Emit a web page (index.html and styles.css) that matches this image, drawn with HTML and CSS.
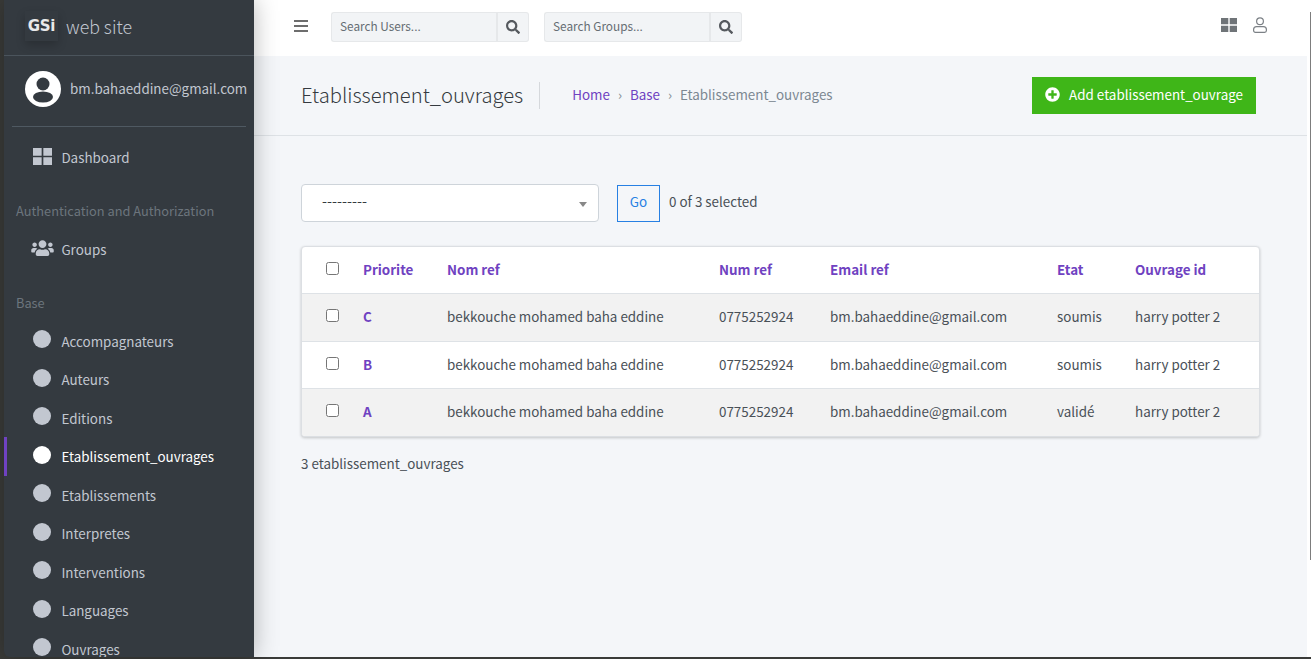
FILE: index.html
```html
<!DOCTYPE html>
<html lang="en">
<head>
  <meta charset="UTF-8">
  <title>Etablissement_ouvrages</title>
  <meta name="viewport" content="width=device-width, initial-scale=1.0">
  <link rel="stylesheet" href="styles.css">
</head>
<body>

<div class="frame">

  <!-- Sidebar -->
  <aside class="sidebar">
    <div class="brand">
      <span class="brand-logo">GSi</span>
      <span class="brand-name">web site</span>
    </div>

    <div class="user-panel">
      <svg class="avatar" viewBox="0 0 36 36">
        <circle cx="18" cy="18" r="18" fill="#fff"/>
        <circle cx="18" cy="13" r="6.5" fill="#343a40"/>
        <ellipse cx="18" cy="26" rx="10" ry="5.5" fill="#343a40"/>
      </svg>
      <span class="user-email">bm.bahaeddine@gmail.com</span>
    </div>

    <nav class="side-nav">
      <a class="side-link" href="#">
        <span class="side-icon">
          <svg class="grid-icon" viewBox="0 0 18 16"><path d="M0 0h8.2v7.2H0zM9.8 0H18v7.2H9.8zM0 8.8h8.2V16H0zM9.8 8.8H18V16H9.8z"/></svg>
        </span>
        Dashboard
      </a>

      <div class="side-title side-title-first">Authentication and Authorization</div>
      <a class="side-link" href="#">
        <span class="side-icon">
          <svg class="groups-icon" viewBox="0 0 640 512"><path d="M96 224c35.3 0 64-28.7 64-64s-28.7-64-64-64-64 28.7-64 64 28.7 64 64 64zm448 0c35.3 0 64-28.7 64-64s-28.7-64-64-64-64 28.7-64 64 28.7 64 64 64zm32 32h-64c-17.6 0-33.5 7.1-45.1 18.6 40.3 22.1 68.9 62 75.1 109.4h66c17.7 0 32-14.3 32-32v-32c0-35.3-28.7-64-64-64zm-256 0c61.9 0 112-50.1 112-112S381.9 32 320 32 208 82.1 208 144s50.1 112 112 112zm76.8 32h-8.3c-20.8 10-43.9 16-68.5 16s-47.6-6-68.5-16h-8.3C179.6 288 128 339.6 128 403.2V432c0 26.5 21.5 48 48 48h288c26.5 0 48-21.5 48-48v-28.8c0-63.6-51.6-115.2-115.2-115.2zm-223.7-13.4C161.5 263.1 145.6 256 128 256H64c-35.3 0-64 28.7-64 64v32c0 17.7 14.3 32 32 32h65.9c6.3-47.4 34.9-87.3 75.2-109.4z"/></svg>
        </span>
        Groups
      </a>

      <div class="side-title">Base</div>
      <a class="side-link" href="#"><span class="side-icon"><i class="dot"></i></span>Accompagnateurs</a>
      <a class="side-link" href="#"><span class="side-icon"><i class="dot"></i></span>Auteurs</a>
      <a class="side-link" href="#"><span class="side-icon"><i class="dot"></i></span>Editions</a>
      <a class="side-link active" href="#"><span class="side-icon"><i class="dot"></i></span>Etablissement_ouvrages</a>
      <a class="side-link" href="#"><span class="side-icon"><i class="dot"></i></span>Etablissements</a>
      <a class="side-link" href="#"><span class="side-icon"><i class="dot"></i></span>Interpretes</a>
      <a class="side-link" href="#"><span class="side-icon"><i class="dot"></i></span>Interventions</a>
      <a class="side-link" href="#"><span class="side-icon"><i class="dot"></i></span>Languages</a>
      <a class="side-link" href="#"><span class="side-icon"><i class="dot"></i></span>Ouvrages</a>
    </nav>
  </aside>

  <div class="main">

    <!-- Top bar -->
    <header class="topbar">
      <svg class="burger" viewBox="0 0 14 12"><path d="M0 0h14v2H0zM0 5h14v2H0zM0 10h14v2H0z"/></svg>

      <form class="search">
        <input class="search-input" type="text" placeholder="Search Users...">
        <button class="search-btn" type="button">
          <svg viewBox="0 0 512 512"><path d="M505 442.7L405.3 343c-4.5-4.5-10.6-7-17-7H372c27.6-35.3 44-79.7 44-128C416 93.1 322.9 0 208 0S0 93.1 0 208s93.1 208 208 208c48.3 0 92.7-16.4 128-44v16.3c0 6.4 2.5 12.5 7 17l99.7 99.7c9.4 9.4 24.6 9.4 33.9 0l28.3-28.3c9.4-9.4 9.4-24.6.1-34zM208 336c-70.7 0-128-57.2-128-128 0-70.7 57.2-128 128-128 70.7 0 128 57.2 128 128 0 70.7-57.2 128-128 128z"/></svg>
        </button>
      </form>

      <form class="search">
        <input class="search-input" type="text" placeholder="Search Groups...">
        <button class="search-btn" type="button">
          <svg viewBox="0 0 512 512"><path d="M505 442.7L405.3 343c-4.5-4.5-10.6-7-17-7H372c27.6-35.3 44-79.7 44-128C416 93.1 322.9 0 208 0S0 93.1 0 208s93.1 208 208 208c48.3 0 92.7-16.4 128-44v16.3c0 6.4 2.5 12.5 7 17l99.7 99.7c9.4 9.4 24.6 9.4 33.9 0l28.3-28.3c9.4-9.4 9.4-24.6.1-34zM208 336c-70.7 0-128-57.2-128-128 0-70.7 57.2-128 128-128 70.7 0 128 57.2 128 128 0 70.7-57.2 128-128 128z"/></svg>
        </button>
      </form>

      <div class="top-icons">
        <svg class="top-grid" viewBox="0 0 16 14"><path d="M0 0h7.3v6.3H0zM8.7 0H16v6.3H8.7zM0 7.7h7.3V14H0zM8.7 7.7H16V14H8.7z"/></svg>
        <svg class="top-user" viewBox="0 0 14 16"><circle cx="7" cy="4.2" r="3.4"/><path d="M3.6 9.7h6.8c1.8 0 3 1.2 3 2.9v.9c0 1-.8 1.8-1.8 1.8H2.4c-1 0-1.8-.8-1.8-1.8v-.9c0-1.7 1.2-2.9 3-2.9z"/></svg>
      </div>
    </header>

    <!-- Page header -->
    <div class="page-header">
      <h1 class="page-title">Etablissement_ouvrages</h1>
      <div class="crumbs">
        <a href="#">Home</a><span class="sep">›</span><a href="#">Base</a><span class="sep">›</span><span class="crumb-current">Etablissement_ouvrages</span>
      </div>
      <a class="add-btn" href="#">
        <svg viewBox="0 0 512 512"><path d="M256 8C119 8 8 119 8 256s111 248 248 248 248-111 248-248S393 8 256 8zm144 276c0 6.6-5.4 12-12 12h-92v92c0 6.6-5.4 12-12 12h-56c-6.6 0-12-5.4-12-12v-92h-92c-6.6 0-12-5.4-12-12v-56c0-6.6 5.4-12 12-12h92v-92c0-6.6 5.4-12 12-12h56c6.6 0 12 5.4 12 12v92h92c6.6 0 12 5.4 12 12v56z"/></svg>
        <span class="add-label">Add etablissement_ouvrage</span>
      </a>
    </div>

    <!-- Changelist -->
    <section class="content">
      <div class="actions">
        <div class="action-select">
          <span class="action-value">---------</span>
          <i class="caret"></i>
        </div>
        <button class="go-btn" type="button">Go</button>
        <span class="selected-count">0 of 3 selected</span>
      </div>

      <div class="table-card">
        <table class="result-table">
          <colgroup>
            <col class="col-check"><col class="col-priorite"><col class="col-nom"><col class="col-num"><col class="col-email"><col class="col-etat"><col class="col-ouvrage">
          </colgroup>
          <thead>
            <tr>
              <th><input type="checkbox"></th>
              <th>Priorite</th>
              <th>Nom ref</th>
              <th>Num ref</th>
              <th>Email ref</th>
              <th>Etat</th>
              <th>Ouvrage id</th>
            </tr>
          </thead>
          <tbody>
            <tr>
              <td><input type="checkbox"></td>
              <td><a href="#">C</a></td>
              <td>bekkouche mohamed baha eddine</td>
              <td>0775252924</td>
              <td>bm.bahaeddine@gmail.com</td>
              <td>soumis</td>
              <td>harry potter 2</td>
            </tr>
            <tr>
              <td><input type="checkbox"></td>
              <td><a href="#">B</a></td>
              <td>bekkouche mohamed baha eddine</td>
              <td>0775252924</td>
              <td>bm.bahaeddine@gmail.com</td>
              <td>soumis</td>
              <td>harry potter 2</td>
            </tr>
            <tr>
              <td><input type="checkbox"></td>
              <td><a href="#">A</a></td>
              <td>bekkouche mohamed baha eddine</td>
              <td>0775252924</td>
              <td>bm.bahaeddine@gmail.com</td>
              <td>validé</td>
              <td>harry potter 2</td>
            </tr>
          </tbody>
        </table>
      </div>

      <p class="result-count">3 etablissement_ouvrages</p>
    </section>
  </div>

  <!-- window edge with scrollbar line -->
  <div class="edge"><div class="edge-line"></div></div>
</div>

</body>
</html>
```

FILE: styles.css
```css
/* Global styles */
html, body {
  margin: 0;
  padding: 0;
  height: 100%;
  overflow: hidden;
}

body {
  font-family: "Noto Sans CJK SC", "Source Sans Pro", "Noto Sans", sans-serif;
  font-size: 13.4px;
  line-height: 20px;
  color: #495057;
  background: #3a3b39;
}

a {
  text-decoration: none;
}

.frame {
  display: flex;
  height: 657px;
  padding-left: 4px;
  background: #3a3b39;
}

/* Sidebar */
.sidebar {
  position: relative;
  z-index: 2;
  flex: 0 0 250px;
  height: 657px;
  overflow: hidden;
  background: #343a40;
  border-bottom-left-radius: 6px;
  box-shadow: 0 0 24px rgba(0, 0, 0, 0.28);
}

.brand {
  display: flex;
  align-items: center;
  height: 55px;
  padding-left: 21px;
  border-bottom: 1px solid #4b545c;
}

.brand-logo {
  width: 33px;
  height: 30px;
  margin-top: -4px;
  font-family: "DejaVu Sans", sans-serif;
  font-size: 15px;
  font-weight: 700;
  line-height: 31px;
  letter-spacing: -0.3px;
  text-align: center;
  color: #e9e9e9;
  box-shadow: 0 4px 10px rgba(0, 0, 0, 0.2);
}

.brand-name {
  margin-left: 8px;
  margin-top: -3px;
  font-size: 17.8px;
  font-weight: 300;
  color: #c2c7d0;
}

.user-panel {
  display: flex;
  align-items: center;
  gap: 9px;
  height: 66px;
  margin: 0 8px;
  padding: 0 0 4px 13px;
  border-bottom: 1px solid #4f5962;
  white-space: nowrap;
}

.avatar {
  flex: none;
  width: 36px;
  height: 36px;
}

.user-email {
  margin-top: -2px;
  color: #c2c7d0;
}

.side-nav {
  padding-top: 11px;
}

.side-link {
  display: flex;
  align-items: center;
  height: 38.5px;
  color: #c2c7d0;
  white-space: nowrap;
}

.side-link.active {
  color: #fff;
  box-shadow: inset 3px 0 0 #6f42c1;
}

.side-icon {
  display: flex;
  justify-content: center;
  align-items: center;
  flex: none;
  width: 57.4px;
  padding-left: 19px;
  box-sizing: border-box;
  margin-top: -3px;
}

.grid-icon {
  width: 19px;
  height: 17px;
  margin-top: 2px;
  fill: #c2c7d0;
}

.groups-icon {
  width: 23px;
  height: 18px;
  margin-top: 2px;
  fill: #c2c7d0;
}

.dot {
  display: block;
  width: 18px;
  height: 18px;
  border-radius: 50%;
  background: #c2c7d0;
}

.active .dot {
  background: #fff;
}

.side-title {
  height: 15px;
  margin-top: 27px;
  margin-bottom: 11.5px;
  padding-left: 12px;
  font-size: 12.8px;
  line-height: 15px;
  color: #6c757d;
  white-space: nowrap;
}

.side-title-first {
  margin-top: 26px;
  margin-bottom: 12px;
}

/* Main column */
.main {
  flex: 0 0 1053px;
  height: 657px;
  background: #f4f6f9;
}

.edge {
  flex: 0 0 4px;
  display: flex;
  justify-content: flex-end;
  align-items: flex-start;
  height: 657px;
  background: #fff;
}

.edge-line {
  width: 1px;
  height: 548px;
  margin-top: 12px;
  background: #7d7d7d;
}

.topbar {
  display: flex;
  align-items: center;
  height: 56px;
  padding-left: 40px;
  background: #fff;
}

.burger {
  width: 14px;
  height: 12px;
  margin-right: 23px;
  margin-top: -5px;
  fill: #6d6d6d;
}

.search {
  display: flex;
  width: 197.5px;
  height: 30px;
  margin-right: 15.5px;
  margin-top: -3px;
}

.search-input {
  flex: 1;
  width: 0;
  padding: 0 8px 2px;
  font: inherit;
  font-size: 11.8px;
  color: #495057;
  background: #f2f4f6;
  border: 1px solid #e6e8ea;
  border-right: 0;
  border-radius: 3px 0 0 3px;
  outline: none;
}

.search-input::placeholder {
  color: #666d73;
  opacity: 1;
}

.search-btn {
  display: flex;
  justify-content: center;
  align-items: center;
  width: 33px;
  padding: 0;
  background: #f2f4f6;
  border: 1px solid #e6e8ea;
  border-left-width: 2px;
  border-radius: 0 3px 3px 0;
}

.search-btn svg {
  width: 14px;
  height: 14px;
  fill: #55595e;
}

.top-icons {
  display: flex;
  align-items: center;
  gap: 16px;
  margin-left: auto;
  margin-right: 40px;
  margin-top: -7px;
}

.top-grid {
  width: 16px;
  height: 14px;
  fill: #6f7478;
}

.top-user {
  width: 14px;
  height: 16px;
  fill: none;
  stroke: #7c8186;
  stroke-width: 1.2;
}

/* Page header */
.page-header {
  display: flex;
  align-items: center;
  height: 79px;
  padding: 0 51px 0 47px;
  border-bottom: 1px solid #dee2e6;
}

.page-title {
  margin: 0;
  padding: 0 16px 2px 0;
  font-size: 20.2px;
  font-weight: 300;
  line-height: 25px;
  color: #343a40;
  border-right: 1px solid #d5d8dc;
}

.crumbs {
  display: flex;
  align-items: center;
  margin-top: -3px;
  margin-left: 32px;
}

.crumbs a {
  color: #6f42c1;
}

.sep {
  width: 20px;
  text-align: center;
  color: #868e96;
}

.crumb-current {
  color: #7c8892;
}

.add-btn {
  display: flex;
  align-items: center;
  gap: 9px;
  height: 37px;
  margin-left: auto;
  padding: 0 13px;
  color: #fff;
  background: #3fb618;
}

.add-btn svg {
  width: 15px;
  height: 15px;
  margin-top: -2px;
  fill: #fff;
}

.add-label {
  margin-top: -3px;
}

/* Changelist */
.content {
  padding: 48px 47px 0;
}

.actions {
  display: flex;
  align-items: center;
  height: 38px;
}

.action-select {
  display: flex;
  justify-content: space-between;
  align-items: center;
  width: 298px;
  height: 38px;
  box-sizing: border-box;
  padding: 0 11px 0 20px;
  font-size: 14.4px;
  color: #343a40;
  background: #fff;
  border: 1px solid #ced4da;
  border-radius: 4px;
}

.action-value {
  margin-top: -5px;
}

.caret {
  display: block;
  width: 0;
  height: 0;
  margin-top: 2px;
  border-top: 5px solid #888;
  border-left: 4px solid transparent;
  border-right: 4px solid transparent;
}

.go-btn {
  width: 43px;
  height: 37px;
  margin-left: 18px;
  padding: 0 0 5px;
  font: inherit;
  color: #2780e3;
  background: transparent;
  border: 1px solid #2780e3;
  border-radius: 0;
  box-sizing: border-box;
}

.selected-count {
  margin-top: -5px;
  margin-left: 9px;
}

.table-card {
  width: 959px;
  box-sizing: border-box;
  margin-top: 24px;
  background: #fff;
  border: 1px solid #dcdfe3;
  border-radius: 4px;
  box-shadow: 0 1px 3px rgba(0, 0, 0, 0.2);
  overflow: hidden;
}

.result-table {
  width: 957px;
  table-layout: fixed;
  border-collapse: collapse;
}

.col-check { width: 49px; }
.col-priorite { width: 84px; }
.col-nom { width: 272px; }
.col-num { width: 111px; }
.col-email { width: 227px; }
.col-etat { width: 78px; }
.col-ouvrage { width: 136px; }

.result-table th,
.result-table td {
  box-sizing: border-box;
  padding: 0 12px 2px;
  text-align: left;
  white-space: nowrap;
}

.result-table th:first-child,
.result-table td:first-child {
  padding: 0 0 3px 24px;
}

.result-table th {
  height: 46px;
  font-weight: 700;
  color: #6f42c1;
}

.result-table td {
  height: 47px;
  border-top: 1px solid #dee2e6;
}

.result-table tbody tr:nth-child(odd) {
  background: #f2f2f2;
}

.result-table tbody tr:nth-child(odd) td {
  height: 48px;
}

.result-table td a {
  font-weight: 700;
  color: #6f42c1;
}

.result-table input {
  display: block;
  width: 13px;
  height: 13px;
  margin: 0;
}

.result-count {
  margin: 16px 0 0;
}
```
